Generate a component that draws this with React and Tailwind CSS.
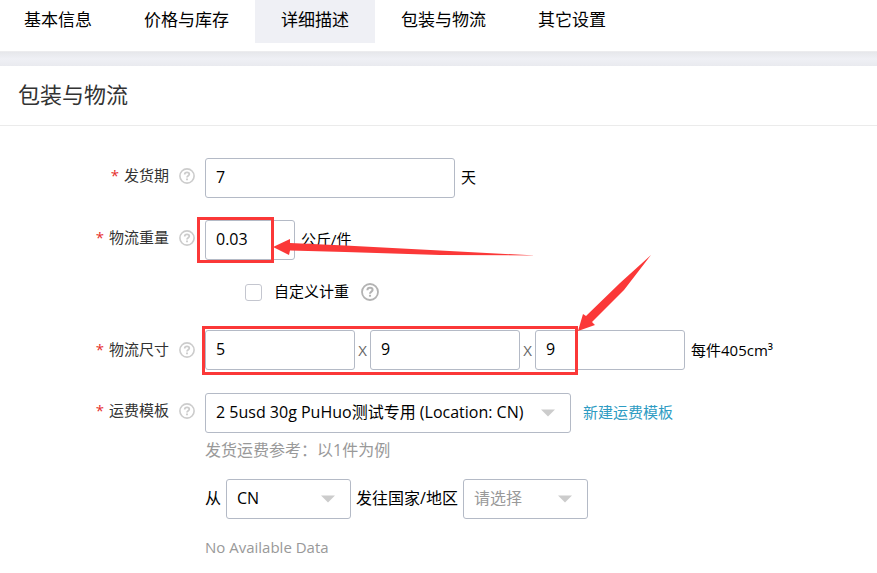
import React from "react";

const tabs = ["基本信息", "价格与库存", "详细描述", "包装与物流", "其它设置"];

const boxClass =
  "h-10 rounded-[3px] border border-[#b4bac6] bg-white px-[10px] pb-[2px] text-base text-black outline-none";

function HelpIcon({ large = false }) {
  return (
    <svg
      viewBox="0 0 18 18"
      className={large ? "size-[18px] shrink-0" : "size-4 shrink-0"}
      fill="none"
      stroke={large ? "#b3b3b3" : "#cccccc"}
      strokeWidth="1.8"
      aria-hidden="true"
    >
      <circle cx="9" cy="9" r="8" />
      <path d="M6.4 7.2C6.4 5.6 7.5 4.8 9 4.8S11.6 5.7 11.6 7C11.6 8.6 9 8.7 9 10.7" strokeWidth="2" />
      <path d="M9 11.8V13.7" strokeWidth="2.1" />
    </svg>
  );
}

function Field({ id, label, center = false, children }) {
  return (
    <div className="flex items-start">
      <div className={`flex w-[195px] shrink-0 items-center justify-end gap-[10px] ${center ? "h-10" : "h-9"}`}>
        <label htmlFor={id} className="flex items-center gap-[5px] pb-[2px] text-[15px] text-[#333]">
          <span className="text-[#e62e2e]" aria-hidden="true">*</span>
          {label}
        </label>
        <HelpIcon />
      </div>
      <div className="ml-[10px] min-w-0 flex-1">{children}</div>
    </div>
  );
}

function Select({ id, label, width, options, muted = false }) {
  return (
    <div className={`relative ${width}`}>
      <select
        id={id}
        aria-label={label}
        className={`w-full appearance-none ${boxClass} ${muted ? "text-[#999]!" : ""}`}
      >
        {options.map((option) => (
          <option key={option}>{option}</option>
        ))}
      </select>
      <svg viewBox="0 0 14 8" className="pointer-events-none absolute top-4 right-4 h-2 w-[14px]" aria-hidden="true">
        <path d="M0 0.5H14L7 7.5Z" fill="#cccccc" />
      </svg>
    </div>
  );
}

function Annotations() {
  return (
    <svg
      className="pointer-events-none absolute top-0 left-0 overflow-visible"
      width="700"
      height="400"
      aria-hidden="true"
    >
      <g fill="none" stroke="#fb3838" strokeWidth="3">
        <rect x="198.5" y="218.5" width="74" height="43" />
        <rect x="203.5" y="327.5" width="373" height="46" />
      </g>
      <g fill="#fb3838">
        <path d="M273 247L290 239V243L345 245.5L440 250.5L536 255.5L440 255L345 252L290 250.5L289 255Z" />
        <path d="M578 331L583 314L586 316L620 283L651 255L624 290L592 322L595 325Z" />
      </g>
    </svg>
  );
}

export default function App() {
  return (
    <div className="relative min-h-screen overflow-x-hidden bg-white font-['Open_Sans','Noto_Sans_CJK_SC',sans-serif] text-black">
      <header className="border-b border-[#ececee] pb-2">
        <nav className="-ml-[2px] flex">
          {tabs.map((tab, index) => (
            <button
              key={tab}
              type="button"
              className={`h-[43px] px-[26px] pb-1 text-[17px] leading-6 whitespace-nowrap ${
                index === 2 ? "bg-[#eff0f5]" : ""
              }`}
            >
              {tab}
            </button>
          ))}
        </nav>
      </header>
      <div className="h-[14px] bg-linear-to-b from-[#e6e7eb] via-[#eff0f5] to-[#e9eaef]" />

      <main>
        <h1 className="flex h-[60px] items-center border-b border-[#ebebeb] px-[18px] pb-[2px] text-[22px] text-[#333]">
          包装与物流
        </h1>

        <form className="pt-8 pb-4">
          <Field id="lead" label="发货期">
            <div className="flex items-center gap-[6px]">
              <input id="lead" defaultValue="7" className={`w-[250px] ${boxClass}`} />
              <span className="pb-[2px] text-[15px]">天</span>
            </div>
          </Field>

          <div className="h-[22px]" />
          <Field id="weight" label="物流重量">
            <div className="flex items-center gap-[6px]">
              <input id="weight" defaultValue="0.03" className={`w-[90px] ${boxClass}`} />
              <span className="pb-[2px] text-[15px]">公斤/件</span>
            </div>
            <div className="mt-5 ml-10 flex h-6 items-center gap-3">
              <input
                id="custom"
                type="checkbox"
                className="size-[17px] appearance-none rounded-[3px] border border-[#c4c6cf] bg-white"
              />
              <label htmlFor="custom" className="pb-[2px] text-[15px]">自定义计重</label>
              <HelpIcon large />
            </div>
          </Field>

          <div className="h-[26px]" />
          <Field id="length" label="物流尺寸" center>
            <div className="flex items-center">
              <input id="length" defaultValue="5" className={`w-[150px] ${boxClass}`} />
              <span className="w-[15px] text-center text-[15px] text-[#666]">X</span>
              <input aria-label="宽" defaultValue="9" className={`w-[150px] ${boxClass}`} />
              <span className="w-[15px] text-center text-[15px] text-[#666]">X</span>
              <input aria-label="高" defaultValue="9" className={`w-[150px] ${boxClass}`} />
              <span className="ml-[6px] text-[15px]">每件405cm³</span>
            </div>
          </Field>

          <div className="h-[23px]" />
          <Field id="template" label="运费模板">
            <div className="flex items-center gap-3">
              <Select
                id="template"
                width="w-[366px]"
                options={["2 5usd 30g PuHuo测试专用 (Location: CN)"]}
              />
              <a href="#" className="pb-[2px] text-[15px] text-[#2e9cc3]">新建运费模板</a>
            </div>
            <p className="mt-[5px] text-base text-[#999]">发货运费参考：以1件为例</p>
            <div className="mt-[17px] flex items-center gap-[5px] text-base">
              <label htmlFor="origin" className="pb-[2px]">从</label>
              <Select id="origin" width="w-[125px]" options={["CN"]} />
              <label htmlFor="destination" className="pb-[2px]">发往国家/地区</label>
              <Select id="destination" width="w-[125px]" options={["请选择"]} muted />
            </div>
            <p className="mt-4 text-[15px] leading-6 text-[#999]">No Available Data</p>
          </Field>
        </form>
      </main>
      <Annotations />
    </div>
  );
}
